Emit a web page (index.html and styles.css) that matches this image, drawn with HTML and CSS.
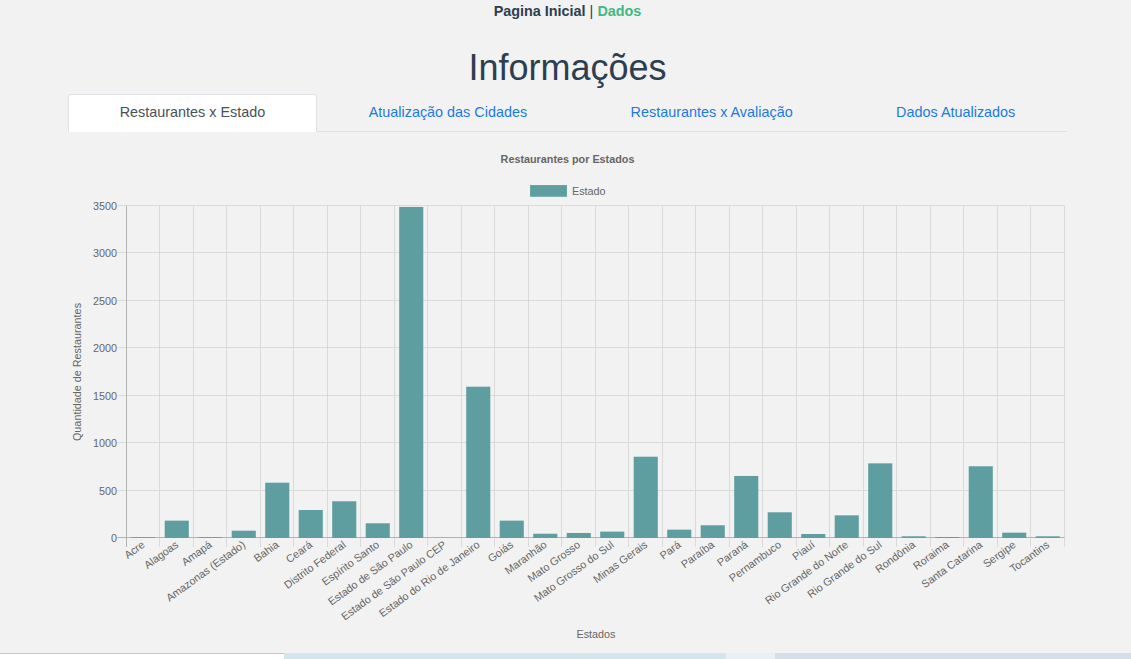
FILE: index.html
```html
<!DOCTYPE html>
<html lang="pt-BR">
<head>
<meta charset="utf-8">
<title>Informações</title>
<link rel="stylesheet" href="styles.css">
</head>
<body>
<div class="app">
  <nav class="topnav"><a class="nav-link-home" href="#">Pagina Inicial</a> | <a class="nav-link-active" href="#">Dados</a></nav>
  <h1 class="page-title">Informações</h1>
  <div class="card">
    <ul class="tabs">
      <li class="tab"><a class="tab-link active" href="#">Restaurantes x Estado</a></li>
      <li class="tab"><a class="tab-link" href="#">Atualização das Cidades</a></li>
      <li class="tab"><a class="tab-link" href="#">Restaurantes x Avaliação</a></li>
      <li class="tab"><a class="tab-link" href="#">Dados Atualizados</a></li>
    </ul>
    <div class="tab-pane">
      <svg class="chart" width="999" height="521" viewBox="68 132 999 521" xmlns="http://www.w3.org/2000/svg">
        <text class="chart-title" x="567.5" y="159" fill="#666">Restaurantes por Estados</text>
        <rect x="530.5" y="185.5" width="36" height="10.8" fill="#5f9ea0" stroke="#6aa6a8"/>
        <text class="legend-text" x="572" y="191" fill="#666">Estado</text>

        <g class="grid">
          <line x1="117.5" y1="205.5" x2="1064.5" y2="205.5"/>
          <line x1="117.5" y1="252.5" x2="1064.5" y2="252.5"/>
          <line x1="117.5" y1="300.5" x2="1064.5" y2="300.5"/>
          <line x1="117.5" y1="347.5" x2="1064.5" y2="347.5"/>
          <line x1="117.5" y1="395.5" x2="1064.5" y2="395.5"/>
          <line x1="117.5" y1="442.5" x2="1064.5" y2="442.5"/>
          <line x1="117.5" y1="490.5" x2="1064.5" y2="490.5"/>

          <line x1="159.5" y1="205.5" x2="159.5" y2="547"/>
          <line x1="193.5" y1="205.5" x2="193.5" y2="547"/>
          <line x1="226.5" y1="205.5" x2="226.5" y2="547"/>
          <line x1="260.5" y1="205.5" x2="260.5" y2="547"/>
          <line x1="293.5" y1="205.5" x2="293.5" y2="547"/>
          <line x1="327.5" y1="205.5" x2="327.5" y2="547"/>
          <line x1="360.5" y1="205.5" x2="360.5" y2="547"/>
          <line x1="394.5" y1="205.5" x2="394.5" y2="547"/>
          <line x1="427.5" y1="205.5" x2="427.5" y2="547"/>
          <line x1="461.5" y1="205.5" x2="461.5" y2="547"/>
          <line x1="494.5" y1="205.5" x2="494.5" y2="547"/>
          <line x1="528.5" y1="205.5" x2="528.5" y2="547"/>
          <line x1="561.5" y1="205.5" x2="561.5" y2="547"/>
          <line x1="595.5" y1="205.5" x2="595.5" y2="547"/>
          <line x1="628.5" y1="205.5" x2="628.5" y2="547"/>
          <line x1="662.5" y1="205.5" x2="662.5" y2="547"/>
          <line x1="695.5" y1="205.5" x2="695.5" y2="547"/>
          <line x1="729.5" y1="205.5" x2="729.5" y2="547"/>
          <line x1="762.5" y1="205.5" x2="762.5" y2="547"/>
          <line x1="796.5" y1="205.5" x2="796.5" y2="547"/>
          <line x1="829.5" y1="205.5" x2="829.5" y2="547"/>
          <line x1="863.5" y1="205.5" x2="863.5" y2="547"/>
          <line x1="896.5" y1="205.5" x2="896.5" y2="547"/>
          <line x1="930.5" y1="205.5" x2="930.5" y2="547"/>
          <line x1="963.5" y1="205.5" x2="963.5" y2="547"/>
          <line x1="997.5" y1="205.5" x2="997.5" y2="547"/>
          <line x1="1030.5" y1="205.5" x2="1030.5" y2="547"/>
          <line x1="1064.5" y1="205.5" x2="1064.5" y2="547"/>
        </g>
        <g class="axis">
          <line x1="126.5" y1="205.5" x2="126.5" y2="547"/>
          <line x1="117.5" y1="537.5" x2="1064.5" y2="537.5"/>
        </g>

        <g class="bars" transform="translate(0,538) scale(1,-0.094857)">
          <rect x="131.2" y="0" width="24.1" height="8"/>
          <rect x="164.7" y="0" width="24.1" height="183"/>
          <rect x="198.2" y="0" width="24.1" height="8"/>
          <rect x="231.7" y="0" width="24.1" height="77"/>
          <rect x="265.2" y="0" width="24.1" height="583"/>
          <rect x="298.7" y="0" width="24.1" height="295"/>
          <rect x="332.2" y="0" width="24.1" height="387"/>
          <rect x="365.7" y="0" width="24.1" height="155"/>
          <rect x="399.2" y="0" width="24.1" height="3490"/>
          <rect x="432.7" y="0" width="24.1" height="1"/>
          <rect x="466.2" y="0" width="24.1" height="1595"/>
          <rect x="499.7" y="0" width="24.1" height="183"/>
          <rect x="533.2" y="0" width="24.1" height="45"/>
          <rect x="566.7" y="0" width="24.1" height="53"/>
          <rect x="600.2" y="0" width="24.1" height="67"/>
          <rect x="633.7" y="0" width="24.1" height="857"/>
          <rect x="667.2" y="0" width="24.1" height="88"/>
          <rect x="700.7" y="0" width="24.1" height="134"/>
          <rect x="734.2" y="0" width="24.1" height="654"/>
          <rect x="767.7" y="0" width="24.1" height="271"/>
          <rect x="801.2" y="0" width="24.1" height="42"/>
          <rect x="834.7" y="0" width="24.1" height="239"/>
          <rect x="868.2" y="0" width="24.1" height="787"/>
          <rect x="901.7" y="0" width="24.1" height="18"/>
          <rect x="935.2" y="0" width="24.1" height="10"/>
          <rect x="968.7" y="0" width="24.1" height="756"/>
          <rect x="1002.2" y="0" width="24.1" height="56"/>
          <rect x="1035.7" y="0" width="24.1" height="18"/>
        </g>

        <g class="ytick" fill="#666">
          <text x="117" y="206">3500</text>
          <text x="117" y="253">3000</text>
          <text x="117" y="301">2500</text>
          <text x="117" y="348">2000</text>
          <text x="117" y="396">1500</text>
          <text x="117" y="443">1000</text>
          <text x="117" y="491">500</text>
          <text x="117" y="538">0</text>
        </g>

        <g class="xtick" fill="#666">
          <text transform="translate(143.25,543) rotate(-36)">Acre</text>
          <text transform="translate(176.75,543) rotate(-36)">Alagoas</text>
          <text transform="translate(210.25,543) rotate(-36)">Amapá</text>
          <text transform="translate(243.75,543) rotate(-36)">Amazonas (Estado)</text>
          <text transform="translate(277.25,543) rotate(-36)">Bahia</text>
          <text transform="translate(310.75,543) rotate(-36)">Ceará</text>
          <text transform="translate(344.25,543) rotate(-36)">Distrito Federal</text>
          <text transform="translate(377.75,543) rotate(-36)">Espírito Santo</text>
          <text transform="translate(411.25,543) rotate(-36)">Estado de São Paulo</text>
          <text transform="translate(444.75,543) rotate(-36)">Estado de São Paulo CEP</text>
          <text transform="translate(478.25,543) rotate(-36)">Estado do Rio de Janeiro</text>
          <text transform="translate(511.75,543) rotate(-36)">Goiás</text>
          <text transform="translate(545.25,543) rotate(-36)">Maranhão</text>
          <text transform="translate(578.75,543) rotate(-36)">Mato Grosso</text>
          <text transform="translate(612.25,543) rotate(-36)">Mato Grosso do Sul</text>
          <text transform="translate(645.75,543) rotate(-36)">Minas Gerais</text>
          <text transform="translate(679.25,543) rotate(-36)">Pará</text>
          <text transform="translate(712.75,543) rotate(-36)">Paraíba</text>
          <text transform="translate(746.25,543) rotate(-36)">Paraná</text>
          <text transform="translate(779.75,543) rotate(-36)">Pernambuco</text>
          <text transform="translate(813.25,543) rotate(-36)">Piauí</text>
          <text transform="translate(846.75,543) rotate(-36)">Rio Grande do Norte</text>
          <text transform="translate(880.25,543) rotate(-36)">Rio Grande do Sul</text>
          <text transform="translate(913.75,543) rotate(-36)">Rondônia</text>
          <text transform="translate(947.25,543) rotate(-36)">Roraima</text>
          <text transform="translate(980.75,543) rotate(-36)">Santa Catarina</text>
          <text transform="translate(1014.25,543) rotate(-36)">Sergipe</text>
          <text transform="translate(1047.75,543) rotate(-36)">Tocantins</text>
        </g>

        <text class="axis-title" transform="translate(77,372) rotate(-90)" fill="#666">Quantidade de Restaurantes</text>
        <text class="axis-title" x="596" y="634" fill="#666">Estados</text>
      </svg>
    </div>
  </div>
</div>
<div class="bottom-strip">
  <div class="strip strip-white"></div>
  <div class="strip strip-blue"></div>
  <div class="strip strip-pale"></div>
  <div class="strip strip-lavender"></div>
</div>
</body>
</html>
```
FILE: styles.css
```css
html, body {
  margin: 0;
  padding: 0;
  background: #f2f2f2;
}

body {
  font-family: "Liberation Sans", Arial, Helvetica, sans-serif;
  color: #2c3e50;
}

.app {
  padding-left: 4px;
}

.topnav {
  text-align: center;
  padding-top: 3px;
  font-size: 14.4px;
  line-height: 16px;
  color: #2c3e50;
}

.topnav a {
  font-weight: bold;
  text-decoration: none;
}

.nav-link-home {
  color: #2c3e50;
}

.nav-link-active {
  color: #42b983;
}

.page-title {
  margin: 27px 0 5px;
  text-align: center;
  font-size: 36px;
  line-height: 43.2px;
  font-weight: normal;
  color: #2c3e50;
}

.card {
  width: 999px;
  margin: 0 auto;
}

.tabs {
  display: flex;
  list-style: none;
  margin: 0;
  padding: 0;
  border-bottom: 1px solid #dee2e6;
}

.tab {
  flex: 1 1 auto;
  text-align: center;
  margin-bottom: -1px;
}

.tab-link {
  display: block;
  padding: 7.2px 14.4px;
  font-size: 14.4px;
  line-height: 21.6px;
  color: #1a7ae6;
  text-decoration: none;
  border: 1px solid transparent;
  border-radius: 3.6px 3.6px 0 0;
}

.tab-link.active {
  color: #495057;
  background: #fff;
  border-color: #dee2e6 #dee2e6 #fff;
}

.chart {
  display: block;
  font-family: "Liberation Sans", Arial, Helvetica, sans-serif;
}

.chart text {
  font-size: 10.8px;
  fill: #666;
  dominant-baseline: central;
}

.chart .chart-title {
  font-weight: bold;
  text-anchor: middle;
}

.chart .legend-text {
  text-anchor: start;
}

.grid line {
  stroke: #dadada;
  stroke-width: 1;
}

.axis line {
  stroke: #b3b3b3;
  stroke-width: 1;
}

.bars rect {
  fill: #5f9ea0;
}

.ytick text {
  text-anchor: end;
}

.xtick text {
  text-anchor: end;
}

.chart .axis-title {
  text-anchor: middle;
}

.bottom-strip {
  display: flex;
  height: 20px;
}

.strip-white {
  flex: 0 0 284px;
  background: #fff;
  border-top: 1px solid #c8c8c8;
}

.strip-blue {
  flex: 0 0 442px;
  background: #d3e6ed;
}

.strip-pale {
  flex: 0 0 49px;
  background: #e9f0f5;
}

.strip-lavender {
  flex: 1 1 auto;
  background: #d4dfea;
}
```
